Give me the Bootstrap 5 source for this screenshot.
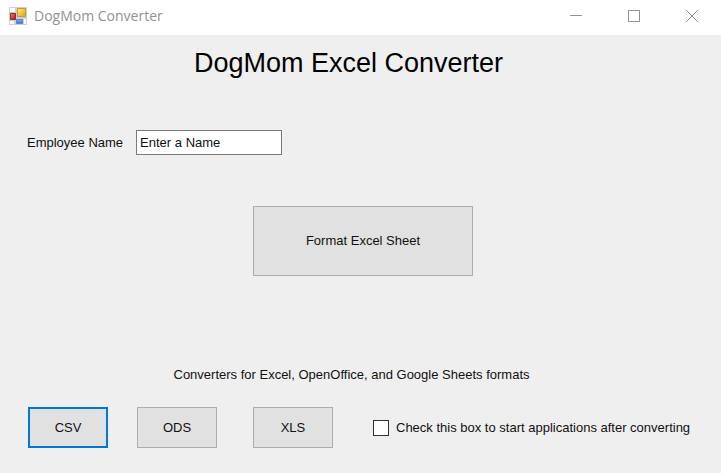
<!DOCTYPE html>
<html lang="en">
<head>
<meta charset="utf-8">
<meta name="viewport" content="width=device-width, initial-scale=1">
<title>DogMom Converter</title>
<link href="https://cdn.jsdelivr.net/npm/bootstrap@5.3.0/dist/css/bootstrap.min.css" rel="stylesheet">
<style>
body { background: #efefef; color: #111; font: 13px/20px "Liberation Sans", Arial, sans-serif; }
.title-bar { background: #fff; height: 35px; color: #929292; font: 14px/20px "Open Sans", "Noto Sans", sans-serif; }
.app-name { padding: 0 0 4px 9px; gap: 7px; }
.caption-btn { width: 58px; height: 31px; color: #929292; border-radius: 0; }
.app-title { font: 27px/32px "Liberation Sans", Arial, sans-serif; color: #000; margin: 12px 24px 51px 0; }
.name-row { padding-left: 27px; gap: 13px; }
.name-box { width: 146px; height: 25px; padding: 0 3px; border: 1px solid #7a7a7a; border-radius: 0; background: #fff; font-size: 13px; line-height: 20px; color: #111; }
.win-btn { height: 41px; width: 80px; background: #e1e1e1; border: 1px solid #adadad; border-radius: 0; font-size: 13px; line-height: 20px; color: #111; }
.win-btn-default { border: 2px solid #0078d7; }
.win-btn-wide { width: 220px; height: 70px; margin: 51px 0 89px 5px; }
.formats-note { margin: 0 18px 22px 0; }
.actions { padding: 0 16px 24px 28px; gap: 40px; }
.converters { gap: 29px; }
.converters .win-btn:last-child { margin-left: 7px; }
.launch-option { gap: 7px; }
.form-check-input.tick[type=checkbox] { width: 16px; height: 16px; margin: 0; border: 1px solid #333; border-radius: 0; background-color: #fff; }
</style>
<script src="https://cdn.jsdelivr.net/npm/bootstrap@5.3.0/dist/js/bootstrap.bundle.min.js"></script>
</head>
<body>
<header class="title-bar d-flex align-items-center justify-content-between">
  <div class="app-name d-flex align-items-center">
    <svg width="18" height="18" viewBox="0 0 18 18" aria-hidden="true">
      <defs>
        <linearGradient id="gold" x1="0" y1="0" x2="1" y2="1"><stop offset="0" stop-color="#ffeb91"/><stop offset="1" stop-color="#dfa300"/></linearGradient>
        <linearGradient id="blue" x1="0" y1="0" x2="0" y2="1"><stop offset="0" stop-color="#85b2fa"/><stop offset="1" stop-color="#356fdb"/></linearGradient>
        <linearGradient id="red" x1="0" y1="0" x2="1" y2="1"><stop offset="0" stop-color="#e58278"/><stop offset="1" stop-color="#a81612"/></linearGradient>
      </defs>
      <path fill="#cfcfcf" d="M0 0h18v18H0z"/>
      <path fill="#fafafa" d="M1 1h5v4H1zM1 14h4v3H1zM15 12h2v5h-2z"/>
      <path fill="url(#red)" stroke="#9c2722" d="M1.500 6.500h5v6h-5z"/>
      <path fill="url(#gold)" stroke="#c79a22" d="M8.500 1.500h8v8h-8z"/>
      <path fill="url(#blue)" stroke="#5286d8" d="M7.500 12.500h6v4h-6z"/>
    </svg>
    <span>DogMom Converter</span>
  </div>
  <div class="d-flex align-self-start">
    <button type="button" class="btn caption-btn p-0 d-flex align-items-center justify-content-center" aria-label="Minimize"><svg width="12" height="12" viewBox="0 0 12 12"><path stroke="currentColor" d="M0 5.500h12"/></svg></button>
    <button type="button" class="btn caption-btn p-0 d-flex align-items-center justify-content-center" aria-label="Maximize"><svg width="12" height="12" viewBox="0 0 12 12"><path fill="none" stroke="currentColor" d="M.5.5h11v11H.5z"/></svg></button>
    <button type="button" class="btn caption-btn p-0 d-flex align-items-center justify-content-center" aria-label="Close"><svg width="12" height="12" viewBox="0 0 12 12"><path stroke="currentColor" d="M0 0l12 12M12 0L0 12"/></svg></button>
  </div>
</header>
<main class="d-flex flex-column">
  <h1 class="app-title text-center">DogMom Excel Converter</h1>
  <div class="name-row d-flex align-items-center">
    <label for="employee">Employee Name</label>
    <input id="employee" class="name-box" type="text" value="Enter a Name">
  </div>
  <button type="button" class="btn win-btn win-btn-wide align-self-center p-0">Format Excel Sheet</button>
  <p class="formats-note text-center">Converters for Excel, OpenOffice, and Google Sheets formats</p>
  <div class="actions d-flex align-items-center">
    <div class="converters d-flex">
      <button type="button" class="btn win-btn win-btn-default p-0">CSV</button>
      <button type="button" class="btn win-btn p-0">ODS</button>
      <button type="button" class="btn win-btn p-0">XLS</button>
    </div>
    <div class="launch-option d-flex align-items-center">
      <input id="launch" class="form-check-input tick" type="checkbox">
      <label for="launch">Check this box to start applications after converting</label>
    </div>
  </div>
</main>
</body>
</html>
